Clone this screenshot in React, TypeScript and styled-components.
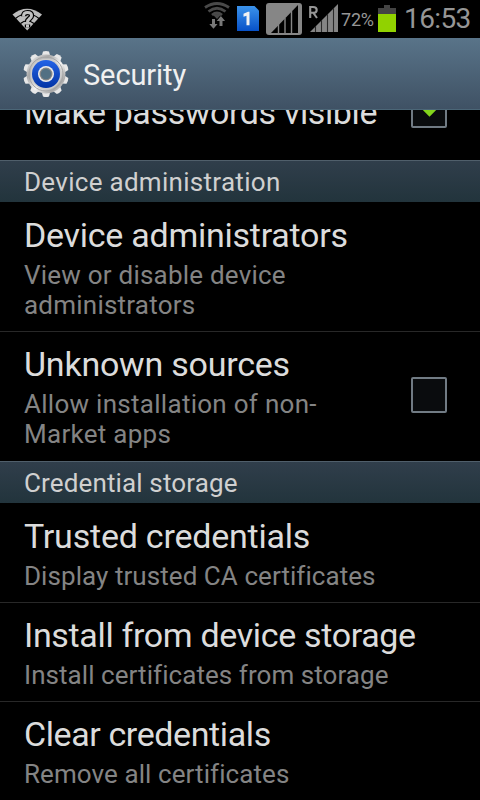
import React from "react";
import styled, { createGlobalStyle } from "styled-components";

const Global = createGlobalStyle`
  * { box-sizing: border-box; }
  html, body { margin: 0; background: #000; }
  body { font-family: Roboto, "Liberation Sans", sans-serif; overflow: hidden; }
`;

const Screen = styled.main`
  width: 480px;
  height: 800px;
  display: flex;
  flex-direction: column;
  overflow: hidden;
  background: #000;
  white-space: nowrap;
`;

const StatusBar = styled.header`
  height: 38px;
  flex: none;
  display: flex;
  align-items: flex-start;
  justify-content: space-between;
  padding-left: 12px;
  padding-right: 9px;
  color: #969696;
`;

const StatusIcons = styled.div`
  display: flex;
  align-items: flex-start;
`;

const Icon = styled.svg<{ $gap?: number }>`
  display: block;
  flex: none;
  margin-right: ${(p) => p.$gap ?? 0}px;
`;

const BatteryLevel = styled.span`
  width: 37px;
  font-size: 18px;
  line-height: 39px;
  letter-spacing: -0.2px;
`;

const Clock = styled.time`
  width: 67px;
  margin-left: 8px;
  font-size: 28px;
  line-height: 37px;
  letter-spacing: -0.6px;
`;

const TitleBar = styled.div`
  height: 72px;
  flex: none;
  display: flex;
  align-items: center;
  gap: 13px;
  padding-left: 22px;
  background: linear-gradient(#597489, #3f5164);
  border-bottom: 1px solid #4b6677;
`;

const Heading = styled.h1`
  margin: 2px 0 0;
  font-size: 29px;
  font-weight: 400;
  line-height: 40px;
  color: #f0f0f0;
  letter-spacing: -0.1px;
`;

const List = styled.div`
  flex: 1;
  min-height: 0;
  display: flex;
  flex-direction: column;
  overflow: hidden;
`;

const ClippedRow = styled.div`
  height: 50px;
  flex: none;
  display: flex;
  align-items: flex-end;
  justify-content: space-between;
  padding: 0 33px 28px 24px;
  overflow: hidden;
`;

const Category = styled.h2<{ $track: number }>`
  height: 42px;
  flex: none;
  margin: 0;
  padding-left: 24px;
  border-top: 1px solid #505f6b;
  background: linear-gradient(#303e4b, #22343c);
  color: #d0d0d0;
  font-size: 26px;
  font-weight: 400;
  line-height: 42px;
  letter-spacing: ${(p) => p.$track}px;
`;

const Row = styled.div<{ $height: number; $top: number; $last?: boolean }>`
  height: ${(p) => p.$height}px;
  flex: none;
  display: flex;
  align-items: flex-start;
  justify-content: space-between;
  padding: ${(p) => p.$top}px 33px 0 24px;
  border-bottom: ${(p) => (p.$last ? "none" : "1px solid #282828")};
`;

const Title = styled.div<{ $track: number }>`
  font-size: 34px;
  line-height: 40px;
  color: #dcdcdc;
  letter-spacing: ${(p) => p.$track}px;
`;

const Summary = styled.div<{ $track: number }>`
  margin-top: 5px;
  font-size: 26px;
  line-height: 30px;
  color: #848484;
  letter-spacing: ${(p) => p.$track}px;
`;

const CheckFrame = styled.div`
  width: 36px;
  height: 36px;
  flex: none;
  margin-top: 33px;
  border: 2px solid #717b84;
  border-radius: 2px;
  background: #0a0c0e;
`;

const ClippedCheck = styled(CheckFrame)`
  margin: 0 0 4px;
  display: flex;
`;

function WifiQuestion() {
  return (
    <Icon width="32" height="38" viewBox="12 0 32 38">
      <path d="M12.500 14.500Q27 3 42 14.500L27.200 30.500Z" fill="#bcbcbc" />
      <path d="M15.500 18.500Q27 9 39 18.500M20.500 23.500Q27 18 34 23.500" fill="none" stroke="#000" strokeWidth="1.200" />
      <path d="M23.700 16.200q0-3.600 3.900-3.600t3.900 3.200c0 2.800-4 2.700-4 6M27.500 24.500v3" fill="none" stroke="#000" strokeWidth="5.400" />
      <path d="M23.500 16.400q0-3.800 4.100-3.800t3.900 3.200c0 2.800-4 2.700-4 6.400M27.500 24.500v3" fill="none" stroke="#c2c2c2" strokeWidth="3" />
    </Icon>
  );
}

function WifiTransfer() {
  return (
    <Icon width="27" height="38" viewBox="204 0 27 38" $gap={6}>
      <g fill="none" stroke="#494949" strokeWidth="2.8">
        <path d="M205 7.5Q217 -.5 229 7.5" />
        <path d="M208.5 11.5Q217 5 225.5 11.5" />
        <path d="M212 15Q217 11 222 15" />
      </g>
      <path d="M213.5 15.200Q217 12.800 220.500 15.200L217 19Z" fill="#494949" />
      <path d="M212 19h3v5h2.500l-4 4.800-4.200-4.800h2.700zM219.500 26v-5h-2.800l4.200-5 4.200 5h-2.600v5z" fill="#777" />
    </Icon>
  );
}

function SimOne() {
  return (
    <Icon width="22" height="38" viewBox="237 0 22 38" $gap={7}>
      <defs>
        <linearGradient id="sim" x2="0" y2="1">
          <stop stopColor="#3b93eb" />
          <stop offset="1" stopColor="#0751c8" />
        </linearGradient>
      </defs>
      <path d="M237 6h17.500l4.500 4.500V31h-22z" fill="url(#sim)" />
      <path d="M243.500 13.800l4.500-2h1.500V25.300H246.500v-9.500l-3 1z" fill="#f2f2f2" />
    </Icon>
  );
}

function EmptySignal() {
  return (
    <Icon width="36" height="38" viewBox="266 0 36 38" $gap={7}>
      <rect x="266" y="3" width="36" height="32" rx="3" fill="#868686" />
      <path d="M271 33L298 5V33Z" fill="#000" />
      <path d="M278.500 24v9M285 18v15M291.500 11v22" stroke="#868686" strokeWidth="1.4" />
    </Icon>
  );
}

function RoamingSignal() {
  return (
    <Icon width="30" height="38" viewBox="309 0 30 38" $gap={2}>
      <path d="M310.200 18V7H313q3.700 0 3.700 2.900t-3.700 2.900h-2.800M313.400 13l3.600 5" fill="none" stroke="#969696" strokeWidth="2.100" />
      <path d="M310 32L338 4V32Z" fill="#858585" />
      <path d="M315.500 26v6M321.500 20v12M327.500 14v18M333.500 8v24" stroke="#292929" strokeWidth="1.1" />
    </Icon>
  );
}

function Battery() {
  return (
    <Icon width="18" height="38" viewBox="378 0 18 38">
      <path d="M378 8h6V5h6v3h6v6h-18z" fill="#444" />
      <path d="M378 14h18v18h-18z" fill="#91d200" />
    </Icon>
  );
}

function SettingsGear() {
  const teeth = Array.from({ length: 10 }, (_, i) => i * 36);
  return (
    <Icon width="48" height="50" viewBox="22 49 48 50">
      <defs>
        <linearGradient id="metal" x2="1" y2="1">
          <stop stopColor="#fff" />
          <stop offset=".3" stopColor="#aaa" />
          <stop offset=".55" stopColor="#f4f4f4" />
          <stop offset=".8" stopColor="#aaa" />
          <stop offset="1" stopColor="#fff" />
        </linearGradient>
        <linearGradient id="blue" x2="0" y2="1">
          <stop stopColor="#2463e6" />
          <stop offset="1" stopColor="#0334a5" />
        </linearGradient>
      </defs>
      {teeth.map((angle) => (
        <path
          key={angle}
          d="M41.500 57L43 51.500Q46 50.500 49 51.500L50.500 57Z"
          fill="#e8e8e8"
          transform={`rotate(${angle} 46 74)`}
        />
      ))}
      <circle cx="46" cy="74" r="19.500" fill="url(#metal)" />
      <circle cx="46" cy="74" r="17" fill="none" stroke="#a4a4a4" strokeWidth="1" />
      <circle cx="46" cy="74" r="15.500" fill="#ccc" />
      <circle cx="46" cy="74" r="14" fill="url(#blue)" />
      <circle cx="46" cy="74" r="8" fill="#ececec" />
      <circle cx="46" cy="74" r="6.500" fill="#858585" />
      <circle cx="46" cy="74" r="5.200" fill="#527083" />
    </Icon>
  );
}

export default function App() {
  return (
    <>
      <Global />
      <Screen>
        <StatusBar>
          <WifiQuestion />
          <StatusIcons>
            <WifiTransfer />
            <SimOne />
            <EmptySignal />
            <RoamingSignal />
            <BatteryLevel>72%</BatteryLevel>
            <Battery />
            <Clock>16:53</Clock>
          </StatusIcons>
        </StatusBar>
        <TitleBar>
          <SettingsGear />
          <Heading>Security</Heading>
        </TitleBar>
        <List>
          <ClippedRow>
            <Title $track={-0.38}>Make passwords visible</Title>
            <ClippedCheck>
              <svg width="32" height="32" viewBox="413 94 32 32">
                <path d="M414 101l6-6 9 9 11-10h6v6l-16.500 16.800z" fill="#83d51c" />
              </svg>
            </ClippedCheck>
          </ClippedRow>
          <Category $track={0.29}>Device administration</Category>
          <Row $height={130} $top={13}>
            <div>
              <Title $track={-0.26}>Device administrators</Title>
              <Summary $track={0.22}>View or disable device<br />administrators</Summary>
            </div>
          </Row>
          <Row $height={129} $top={12} $last>
            <div>
              <Title $track={-0.22}>Unknown sources</Title>
              <Summary $track={0.28}>Allow installation of non-<br />Market apps</Summary>
            </div>
            <CheckFrame />
          </Row>
          <Category $track={0.14}>Credential storage</Category>
          <Row $height={100} $top={13}>
            <div>
              <Title $track={-0.22}>Trusted credentials</Title>
              <Summary $track={0.06}>Display trusted CA certificates</Summary>
            </div>
          </Row>
          <Row $height={99} $top={12}>
            <div>
              <Title $track={-0.34}>Install from device storage</Title>
              <Summary $track={0.06}>Install certificates from storage</Summary>
            </div>
          </Row>
          <Row $height={98} $top={12} $last>
            <div>
              <Title $track={-0.4}>Clear credentials</Title>
              <Summary $track={0.08}>Remove all certificates</Summary>
            </div>
          </Row>
        </List>
      </Screen>
    </>
  );
}
